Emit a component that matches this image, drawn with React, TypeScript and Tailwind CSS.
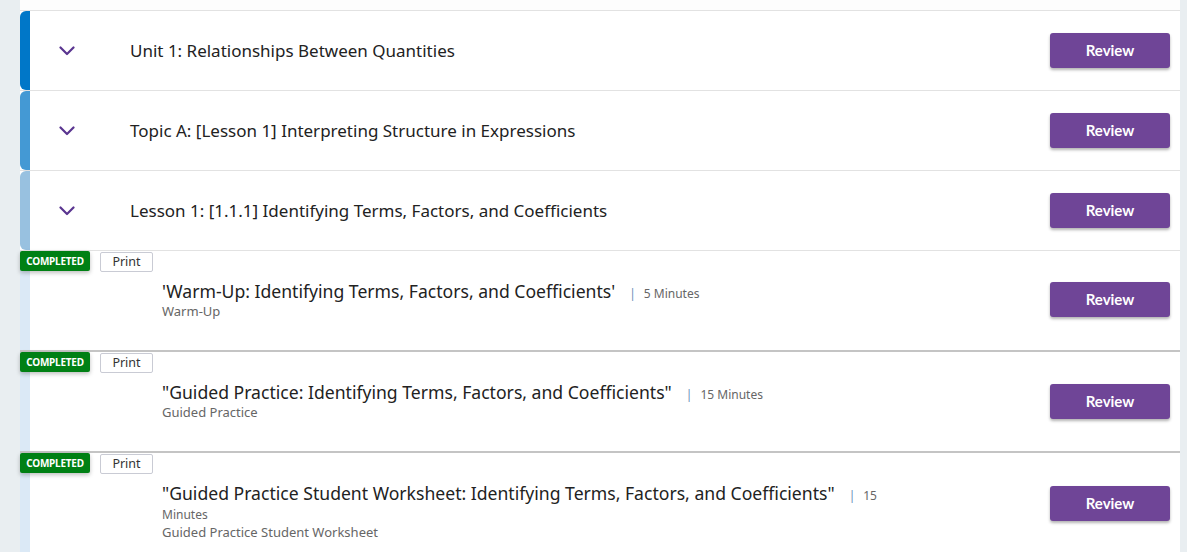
const headers = [
  { title: 'Unit 1: Relationships Between Quantities', bar: 'bg-[#0077c8]' },
  { title: 'Topic A: [Lesson 1] Interpreting Structure in Expressions', bar: 'bg-[#4499d4]' },
  { title: 'Lesson 1: [1.1.1] Identifying Terms, Factors, and Coefficients', bar: 'bg-[#98c1e0]' },
];

const activities = [
  {
    title: "'Warm-Up: Identifying Terms, Factors, and Coefficients'",
    minutes: '5 Minutes',
    kind: 'Warm-Up',
  },
  {
    title: '"Guided Practice: Identifying Terms, Factors, and Coefficients"',
    minutes: '15 Minutes',
    kind: 'Guided Practice',
  },
  {
    title: '"Guided Practice Student Worksheet: Identifying Terms, Factors, and Coefficients"',
    minutes: '15 Minutes',
    kind: 'Guided Practice Student Worksheet',
  },
];

function ReviewButton({ className = '' }: { className?: string }) {
  return (
    <button
      className={`h-[35px] w-[120px] shrink-0 rounded-[3px] bg-[#6f4597] text-[15px] font-bold text-white shadow-[0_2px_3px_rgba(0,0,0,0.3)] font-['Lato',sans-serif] ${className}`}
    >
      Review
    </button>
  );
}

function Chevron() {
  return (
    <svg width="16" height="10" viewBox="0 0 16 10" fill="none">
      <path d="M1.5 1.5 L8 8 L14.5 1.5" stroke="#5a3590" strokeWidth="2.2" strokeLinecap="round" strokeLinejoin="round" />
    </svg>
  );
}

export default function App() {
  return (
    <div className="flex h-[552px] w-full overflow-hidden bg-[#e9eef1] pl-[20px] pr-[7px] font-['Noto_Sans',sans-serif]">
      <div className="flex flex-1 flex-col bg-white">
        <div className="h-[11px] shrink-0 border-b border-[#e2e2e2] bg-[#fdfdfd]" />
        {headers.map((h) => (
          <div key={h.title} className="flex h-[80px] shrink-0 border-b border-[#e2e2e2]">
            <div className={`w-[10px] rounded-l-[6px] ${h.bar}`} />
            <div className="flex flex-1 items-center pr-[10px]">
              <div className="mr-[26px] flex w-[74px] justify-center">
                <Chevron />
              </div>
              <span className="flex-1 text-[17px] text-[#222]">{h.title}</span>
              <ReviewButton />
            </div>
          </div>
        ))}
        {activities.map((a, i) => (
          <div
            key={a.title}
            className={`relative flex shrink-0 ${i < activities.length - 1 ? 'border-b-2 border-[#c4c4c4]' : ''}`}
          >
            <div className="w-[10px] bg-[#dbe9f6]" />
            <div className="absolute left-0 top-0 flex items-start gap-[10px]">
              <span className="flex h-[20px] w-[70px] items-center justify-center rounded-[2px] bg-[#008014] text-[10px] font-bold tracking-tight text-white shadow-[0_2px_4px_rgba(0,0,0,0.25)]">
                COMPLETED
              </span>
              <span className="mt-[1px] flex h-[20px] w-[53px] items-center justify-center rounded-[2px] border border-[#c9cbd4] bg-white text-[12.5px] text-[#333]">
                Print
              </span>
            </div>
            <div className="flex flex-1 items-start pr-[10px]">
              <div className="ml-[132px] w-[725px] pb-[30px] pt-[31px]">
                <div className="text-[17.6px] leading-[19px] text-[#222]">
                  {a.title}
                  <span className="ml-[14px] text-[12px] leading-[12px] text-[#666]">
                    <span className="mr-[8px] text-[#6a8db8]">|</span>
                    {a.minutes}
                  </span>
                </div>
                <div className="mt-[1px] text-[13px] leading-[18px] text-[#666]">{a.kind}</div>
              </div>
              <div className="flex-1" />
              <ReviewButton className={i === 2 ? 'mt-[33px]' : i === 1 ? 'mt-[32px]' : 'mt-[31px]'} />
            </div>
          </div>
        ))}
      </div>
    </div>
  );
}
